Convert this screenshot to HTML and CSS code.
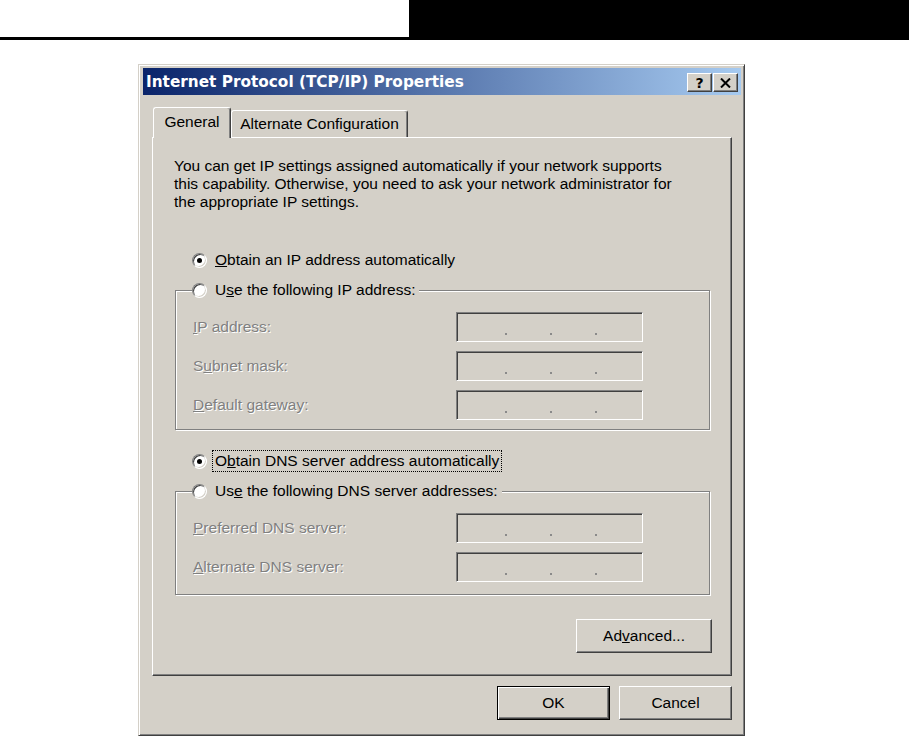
FILE: index.html
```html
<!DOCTYPE html>
<html lang="en">

<head>
  <meta charset="UTF-8">
  <meta name="viewport" content="width=device-width, initial-scale=1.0">
  <title>Internet Protocol (TCP/IP) Properties</title>
  <link rel="stylesheet" href="styles.css">
</head>

<body>
  <div class="page-head">
    <div class="head-fill"></div>
  </div>

  <div class="dialog">
    <div class="titlebar">
      <span class="title">Internet Protocol (TCP/IP) Properties</span>
      <div class="title-btns">
        <span class="tbtn">?</span>
        <span class="tbtn">
          <svg width="11" height="10" viewBox="0 0 11 10">
            <path d="M1 0.5 L10 9.5 M10 0.5 L1 9.5" stroke="#000" stroke-width="2" fill="none" />
          </svg>
        </span>
      </div>
    </div>

    <div class="dialog-body">
      <div class="tabs">
        <div class="tab active">General</div>
        <div class="tab">Alternate Configuration</div>
      </div>

      <div class="panel">
        <p class="intro">You can get IP settings assigned automatically if your network supports<br>
          this capability. Otherwise, you need to ask your network administrator for<br>
          the appropriate IP settings.</p>

        <div class="option first">
          <span class="radio checked"></span>
          <span><u>O</u>btain an IP address automatically</span>
        </div>

        <fieldset class="group">
          <legend class="legend">
            <span class="radio"></span>
            <span>U<u>s</u>e the following IP address:</span>
          </legend>
          <div class="fields">
            <span class="label"><u>I</u>P address:</span>
            <div class="ip"><i></i><i></i><i></i></div>
            <span class="label">S<u>u</u>bnet mask:</span>
            <div class="ip"><i></i><i></i><i></i></div>
            <span class="label"><u>D</u>efault gateway:</span>
            <div class="ip"><i></i><i></i><i></i></div>
          </div>
        </fieldset>

        <div class="option dns">
          <span class="radio checked"></span>
          <span class="focus">O<u>b</u>tain DNS server address automatically</span>
        </div>

        <fieldset class="group group-dns">
          <legend class="legend">
            <span class="radio"></span>
            <span>Us<u>e</u> the following DNS server addresses:</span>
          </legend>
          <div class="fields">
            <span class="label"><u>P</u>referred DNS server:</span>
            <div class="ip"><i></i><i></i><i></i></div>
            <span class="label"><u>A</u>lternate DNS server:</span>
            <div class="ip"><i></i><i></i><i></i></div>
          </div>
        </fieldset>

        <div class="adv-row">
          <button class="btn adv">Ad<u>v</u>anced...</button>
        </div>
      </div>

      <div class="footer">
        <button class="btn default">OK</button>
        <button class="btn">Cancel</button>
      </div>
    </div>
  </div>
</body>

</html>
```

FILE: styles.css
```css
* {
  margin: 0;
  padding: 0;
  box-sizing: border-box;
}

body {
  background: #fff;
  font-family: "Liberation Sans", Arial, sans-serif;
  font-size: 15.5px;
  color: #000;
}

/* page header strip */
.page-head {
  height: 40px;
  border-bottom: 3px solid #000;
}

.head-fill {
  margin-left: 409px;
  height: 40px;
  background: #000;
}

/* window */
.dialog {
  width: 607px;
  height: 672px;
  margin: 24px 0 0 138px;
  padding: 3px 3px 0 4px;
  background: #d4d0c8;
  border: 1px solid;
  border-color: #d4d0c8 #404040 #404040 #d4d0c8;
  box-shadow: inset 1px 1px #fff, inset -1px -1px #808080;
}

.titlebar {
  height: 27px;
  padding: 0 3px;
  display: flex;
  align-items: center;
  justify-content: space-between;
  background: linear-gradient(to right, #0a246a, #a6caf0);
}

.title {
  color: #fff;
  font-family: "DejaVu Sans", sans-serif;
  font-weight: bold;
  font-size: 15.3px;
}

.title-btns {
  display: flex;
  gap: 1px;
  margin-top: 2px;
}

.tbtn {
  width: 25px;
  height: 19px;
  display: flex;
  align-items: center;
  justify-content: center;
  background: #d4d0c8;
  border: 1px solid;
  border-color: #fff #404040 #404040 #fff;
  box-shadow: inset -1px -1px #808080;
  font-family: "DejaVu Sans", sans-serif;
  font-weight: bold;
  font-size: 14px;
  line-height: 1;
}

.dialog-body {
  padding: 12px 9px 0;
}

/* tabs */
.tabs {
  height: 30px;
  padding-left: 1px;
  display: flex;
  align-items: flex-end;
}

.tab {
  height: 27px;
  line-height: 26px;
  text-align: center;
  width: 177px;
  background: #d4d0c8;
  border: 1px solid;
  border-bottom: 0;
  border-color: #fff #404040 #fff #fff;
  border-radius: 3px 3px 0 0;
  box-shadow: inset -1px 0 #808080;
}

.tab.active {
  position: relative;
  width: 78px;
  height: 31px;
  line-height: 28px;
  margin-bottom: -1px;
}

/* tab page */
.panel {
  height: 539px;
  padding: 19px 20px 0 21px;
  border: 1px solid;
  border-color: #fff #404040 #404040 #fff;
  box-shadow: inset -1px -1px #808080;
}

.intro {
  line-height: 18px;
}

.option {
  height: 20px;
  padding-left: 18px;
  display: flex;
  align-items: center;
  gap: 8px;
}

.option.first {
  margin-top: 39px;
}

.option.dns {
  margin-top: 21px;
}

.focus {
  margin-left: -2px;
  padding: 1px 2px;
  line-height: 18px;
  outline: 1px dotted #000;
}

.radio {
  position: relative;
  flex: none;
  width: 15px;
  height: 15px;
  border-radius: 50%;
  background: #fff;
  border: 1px solid;
  border-color: #808080 #fff #fff #808080;
  box-shadow: inset 1px 1px #404040, inset -1px -1px #d4d0c8;
}

.radio.checked::after {
  content: "";
  position: absolute;
  left: 4px;
  top: 4px;
  width: 5px;
  height: 5px;
  border-radius: 50%;
  background: #000;
}

/* group boxes */
.group {
  margin: 10px 1px 0;
  min-width: 0;
  padding: 12px 0 9px 17px;
  border: 1px solid #808080;
  box-shadow: inset 1px 1px #fff, 1px 1px #fff;
}

.group-dns {
  padding-bottom: 12px;
}

.legend {
  height: 20px;
  margin-left: -1px;
  padding-right: 4px;
  display: flex;
  align-items: center;
  gap: 8px;
  background: #d4d0c8;
}

.fields {
  display: grid;
  grid-template-columns: 263px 187px;
  row-gap: 9px;
  align-items: center;
}

.label {
  color: #808080;
  text-shadow: 1px 1px #fff;
}

.ip {
  height: 30px;
  padding: 0 0 6px 48px;
  display: flex;
  align-items: flex-end;
  gap: 43px;
  border: 1px solid;
  border-color: #808080 #fff #fff #808080;
  box-shadow: inset 1px 1px #404040, inset -1px -1px #d4d0c8;
}

.ip i {
  width: 2px;
  height: 2px;
  background: #8a8a8a;
}

/* buttons */
.btn {
  height: 34px;
  width: 113px;
  font-family: inherit;
  font-size: 15.5px;
  color: #000;
  background: #d4d0c8;
  border: 1px solid;
  border-color: #fff #404040 #404040 #fff;
  box-shadow: inset -1px -1px #808080;
}

.btn.default {
  border-color: #000;
  box-shadow: inset 1px 1px #fff, inset -1px -1px #404040, inset -2px -2px #808080;
}

.adv-row {
  margin: 24px -1px 0 0;
  display: flex;
  justify-content: flex-end;
}

.btn.adv {
  width: 136px;
}

.footer {
  margin-top: 10px;
  display: flex;
  justify-content: flex-end;
  gap: 9px;
}
```
